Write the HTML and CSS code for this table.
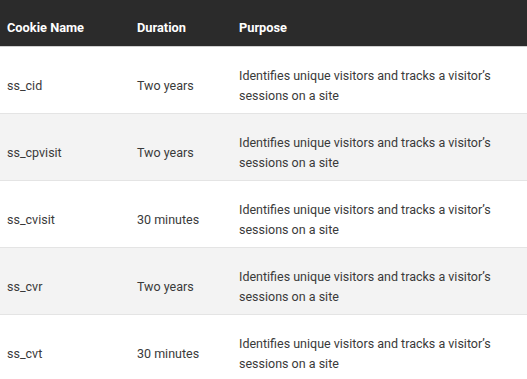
FILE: index.html
```html
<!DOCTYPE html>
<html>
<head>
<meta charset="utf-8">
<link rel="stylesheet" href="styles.css">
</head>
<body>
<table class="cookies">
  <colgroup><col class="c1"><col class="c2"><col class="c3"></colgroup>
  <thead>
    <tr><th>Cookie Name</th><th>Duration</th><th>Purpose</th></tr>
  </thead>
  <tbody>
    <tr><td>ss_cid</td><td>Two years</td><td>Identifies unique visitors and tracks a visitor’s sessions on a site</td></tr>
    <tr class="alt"><td>ss_cpvisit</td><td>Two years</td><td>Identifies unique visitors and tracks a visitor’s sessions on a site</td></tr>
    <tr><td>ss_cvisit</td><td>30 minutes</td><td>Identifies unique visitors and tracks a visitor’s sessions on a site</td></tr>
    <tr class="alt"><td>ss_cvr</td><td>Two years</td><td>Identifies unique visitors and tracks a visitor’s sessions on a site</td></tr>
    <tr><td>ss_cvt</td><td>30 minutes</td><td>Identifies unique visitors and tracks a visitor’s sessions on a site</td></tr>
  </tbody>
</table>
</body>
</html>
```
FILE: styles.css
```css
html, body { margin: 0; padding: 0; background: #fff; }
body { font-family: Roboto, "Liberation Sans", sans-serif; color: #3a3a3a; }
.cookies { width: 527px; border-collapse: collapse; table-layout: fixed; }
.c1 { width: 130px; }
.c2 { width: 102px; }
.cookies th { background: #2b2b2b; color: #fff; font-weight: 700; font-size: 12.8px; line-height: 20px; text-align: left; padding: 18px 7px 8px; vertical-align: top; border-bottom: 1px solid #d0d0d0; }
.cookies td { font-size: 12.5px; line-height: 20px; padding: 19px 7px 7px; vertical-align: middle; border-bottom: 1px solid #e4e4e4; }
.cookies td:last-child { padding-right: 20px; }
.cookies tr.alt td { background: #f3f3f3; }
```
